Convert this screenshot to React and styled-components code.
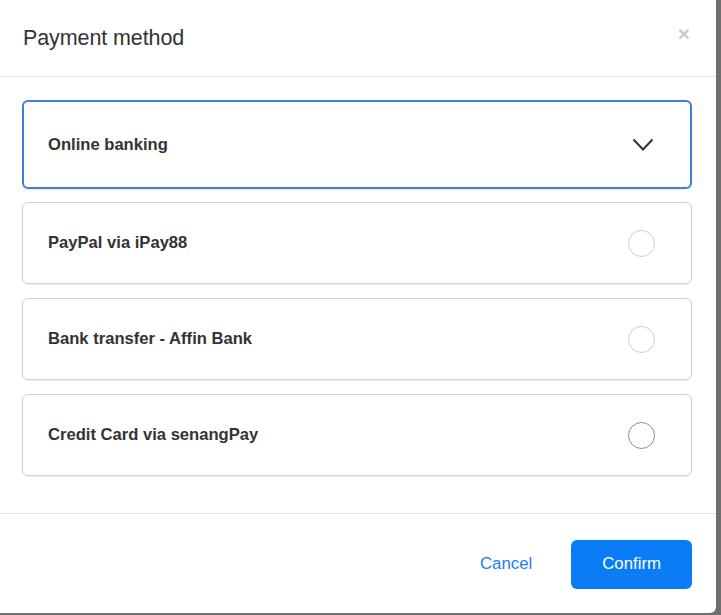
import React from "react";
import styled, { createGlobalStyle } from "styled-components";

const Global = createGlobalStyle`
  html, body { margin: 0; padding: 0; }
  body {
    background: #6f6f6f;
    font-family: "Liberation Sans", Arial, sans-serif;
    width: 721px;
    height: 615px;
    overflow: hidden;
  }
`;

const Backdrop = styled.div`
  width: 721px;
  height: 615px;
  display: flex;
  align-items: flex-start;
`;

const Modal = styled.div`
  width: 716px;
  height: 613px;
  background: #fff;
  border-radius: 0 0 6px 0;
  display: flex;
  flex-direction: column;
`;

const Header = styled.div`
  height: 76px;
  border-bottom: 1px solid #e3e3e3;
  display: flex;
  align-items: center;
  justify-content: space-between;
  padding: 0 26px 0 23px;
  box-sizing: content-box;
`;

const Title = styled.h2`
  margin: 0;
  font-size: 21.5px;
  font-weight: 400;
  color: #333;
  letter-spacing: -0.1px;
  padding-top: 1px;
`;

const Close = styled.button`
  border: none;
  background: none;
  padding: 0;
  font-family: "Liberation Sans", Arial, sans-serif;
  font-size: 21px;
  font-weight: 700;
  color: #c9c9c9;
  line-height: 1;
  margin-bottom: 10px;
  cursor: pointer;
`;

const Body = styled.div`
  flex: 1;
  padding: 23px 24px 0 22px;
  display: flex;
  flex-direction: column;
  gap: 14px;
`;

const Card = styled.div`
  box-sizing: border-box;
  height: ${(p) => (p.$active ? 89 : 82)}px;
  margin-bottom: ${(p) => (p.$active ? -1 : 0)}px;
  border: ${(p) => (p.$active ? "2px solid #3c7fdc" : "1px solid #cfcfcf")};
  border-radius: 6px;
  box-shadow: 0 1px 2px rgba(0, 0, 0, 0.08);
  display: flex;
  align-items: center;
  justify-content: space-between;
  padding: 0 36px 0 ${(p) => (p.$active ? 24 : 25)}px;
  cursor: pointer;
`;

const Label = styled.span`
  font-size: 16.6px;
  font-weight: 700;
  color: #333;
`;

const Radio = styled.span`
  width: 27px;
  height: 27px;
  border-radius: 50%;
  box-sizing: border-box;
  border: 1px solid ${(p) => (p.$dark ? "#8c8c8c" : "#cdcdcd")};
  background: #fff;
`;

const Footer = styled.div`
  height: 98px;
  border-top: 1px solid #e3e3e3;
  display: flex;
  align-items: center;
  justify-content: flex-end;
  padding: 1px 24px 0 0;
  gap: 8px;
`;

const Button = styled.button`
  font-family: "Liberation Sans", Arial, sans-serif;
  font-size: 16.8px;
  height: 49px;
  padding: 0 31px;
  border-radius: 6px;
  border: none;
  background: ${(p) => (p.$primary ? "#0a7cf8" : "transparent")};
  color: ${(p) => (p.$primary ? "#fff" : "#1a80f5")};
  cursor: pointer;
`;

const Chevron = () => (
  <svg width="22" height="14" viewBox="0 0 22 14" fill="none">
    <path d="M1.5 1.5 L11 11.5 L20.5 1.5" stroke="#333" strokeWidth="2" />
  </svg>
);

const methods = [
  { name: "Online banking", active: true },
  { name: "PayPal via iPay88" },
  { name: "Bank transfer - Affin Bank" },
  { name: "Credit Card via senangPay", dark: true },
];

export default function App() {
  return (
    <>
      <Global />
      <Backdrop>
        <Modal>
          <Header>
            <Title>Payment method</Title>
            <Close aria-label="Close">×</Close>
          </Header>
          <Body>
            {methods.map((m) => (
              <Card key={m.name} $active={m.active}>
                <Label>{m.name}</Label>
                {m.active ? <Chevron /> : <Radio $dark={m.dark} />}
              </Card>
            ))}
          </Body>
          <Footer>
            <Button>Cancel</Button>
            <Button $primary>Confirm</Button>
          </Footer>
        </Modal>
      </Backdrop>
    </>
  );
}
